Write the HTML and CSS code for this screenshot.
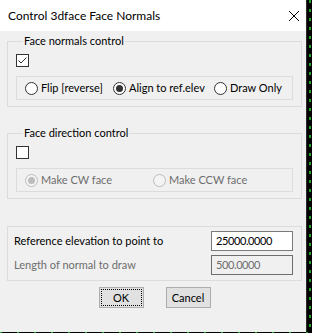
FILE: index.html
```html
<!DOCTYPE html>
<html>
<head>
<meta charset="utf-8">
<title>Control 3dface Face Normals</title>
<link rel="stylesheet" href="styles.css">
</head>
<body>
<div class="dialog">
  <div class="titlebar">
    <span class="title">Control 3dface Face Normals</span>
    <svg class="close" width="10" height="10" viewBox="0 0 10 10"><path d="M0 0L10 10M10 0L0 10" stroke="#000" stroke-width="1" fill="none"/></svg>
  </div>
  <div class="client">
    <fieldset class="group with-legend">
      <legend>Face normals control</legend>
      <span class="check"><svg width="11" height="11" viewBox="0 0 11 11"><path d="M1.5 5.5L4 8L9.5 2.5" stroke="#333" stroke-width="1" fill="none"/></svg></span>
      <div class="frame">
        <label class="radio r-flip"><span class="dot"></span>Flip [reverse]</label>
        <label class="radio r-align"><span class="dot on"></span>Align to ref.elev</label>
        <label class="radio"><span class="dot"></span>Draw Only</label>
      </div>
    </fieldset>

    <fieldset class="group with-legend second">
      <legend>Face direction control</legend>
      <span class="check"></span>
      <div class="frame disabled">
        <label class="radio r-cw"><span class="dot on"></span>Make CW face</label>
        <label class="radio"><span class="dot"></span>Make CCW face</label>
      </div>
    </fieldset>

    <div class="group values">
      <div class="row">
        <span class="lbl">Reference elevation to point to</span>
        <span class="field">25000.0000</span>
      </div>
      <div class="row disabled">
        <span class="lbl">Length of normal to draw</span>
        <span class="field">500.0000</span>
      </div>
    </div>

    <div class="buttons">
      <button class="btn default"><span class="focus">OK</span></button>
      <button class="btn">Cancel</button>
    </div>
  </div>
</div>
</body>
</html>
```

FILE: styles.css
```css
html, body {
  margin: 0;
  padding: 0;
}
body {
  width: 312px;
  height: 333px;
  overflow: hidden;
  background-color: #000;
  background-image:
    repeating-linear-gradient(to bottom, #20a020 0 3px, transparent 3px 9px),
    repeating-linear-gradient(to right, #20a020 0 2px, transparent 2px 17px);
  background-size: 2px 333px, 312px 1px;
  background-position: 309px 0, 0 332px;
  background-repeat: no-repeat;
  font-family: Lato, "Noto Sans", sans-serif;
  font-size: 11px;
  color: #000;
}
.dialog {
  width: 306px;
  height: 332px;
  background: #f0f0f0;
  border-right: 1px solid #2b2b2b;
  display: flex;
  flex-direction: column;
}
.titlebar {
  height: 31px;
  background: #fff;
  display: flex;
  align-items: center;
  justify-content: space-between;
  padding: 0 7px 0 8px;
  flex: none;
}
.title {
  font-size: 12px;
  line-height: 16px;
  margin-top: 1px;
}
.close {
  display: block;
  margin-top: 1px;
}
.client {
  padding: 0 0 0 7px;
}
.group {
  box-sizing: border-box;
  width: 295px;
  margin: 0;
  border: 1px solid #dcdcdc;
  min-inline-size: 0;
}
.with-legend {
  margin-top: 2px;
  padding: 5px 8px 6px 8px;
}
.with-legend.second {
  margin-top: 18px;
}
legend {
  padding: 0 1px;
  margin-left: 7px;
  line-height: 16px;
  font-size: 11px;
}
.check {
  display: block;
  box-sizing: border-box;
  width: 13px;
  height: 13px;
  border: 1px solid #333;
  background: #fff;
}
.check svg {
  display: block;
}
.frame {
  box-sizing: border-box;
  height: 24px;
  margin-top: 9px;
  border: 1px solid #dcdcdc;
  padding-left: 8px;
  display: flex;
  align-items: center;
}
.radio {
  display: flex;
  align-items: center;
  line-height: 16px;
  white-space: nowrap;
}
.r-flip { width: 88px; }
.r-align { width: 101px; }
.r-cw { width: 128px; }
.dot {
  box-sizing: border-box;
  width: 13px;
  height: 13px;
  border: 1px solid #333;
  border-radius: 50%;
  background: #fff;
  margin-right: 3px;
  display: flex;
  align-items: center;
  justify-content: center;
  flex: none;
}
.dot.on::after {
  content: "";
  width: 7px;
  height: 7px;
  border-radius: 50%;
  background: #333;
}
.disabled {
  color: #6d6d6d;
}
.frame.disabled .dot {
  border-color: #bcbcbc;
  background: #f4f4f4;
}
.frame.disabled .dot.on::after {
  background: #bcbcbc;
}
.values {
  margin-top: 27px;
  padding: 4px 8px 5px 6px;
  display: flex;
  flex-direction: column;
  gap: 4px;
}
.row {
  display: flex;
  align-items: center;
  justify-content: space-between;
  height: 20px;
}
.lbl {
  line-height: 16px;
}
.field {
  box-sizing: border-box;
  width: 82px;
  height: 20px;
  border: 1px solid #7a7a7a;
  background: #fff;
  padding: 1px 4px 0 4px;
  line-height: 16px;
  letter-spacing: -0.4px;
}
.row.disabled .field {
  background: #f0f0f0;
  border-color: #6d6d6d;
}
.buttons {
  margin-top: 6px;
  width: 295px;
  display: flex;
  justify-content: center;
  gap: 22px;
}
.btn {
  box-sizing: border-box;
  width: 45px;
  height: 21px;
  border: 1px solid #adadad;
  background: #e1e1e1;
  font-family: inherit;
  font-size: 11px;
  color: #000;
  padding: 0;
  display: flex;
  align-items: center;
  justify-content: center;
  line-height: 16px;
}
.btn.default {
  padding: 1px;
}
.focus {
  box-sizing: border-box;
  width: 100%;
  height: 100%;
  border: 1px dotted #000;
  display: flex;
  align-items: center;
  justify-content: center;
}
```
